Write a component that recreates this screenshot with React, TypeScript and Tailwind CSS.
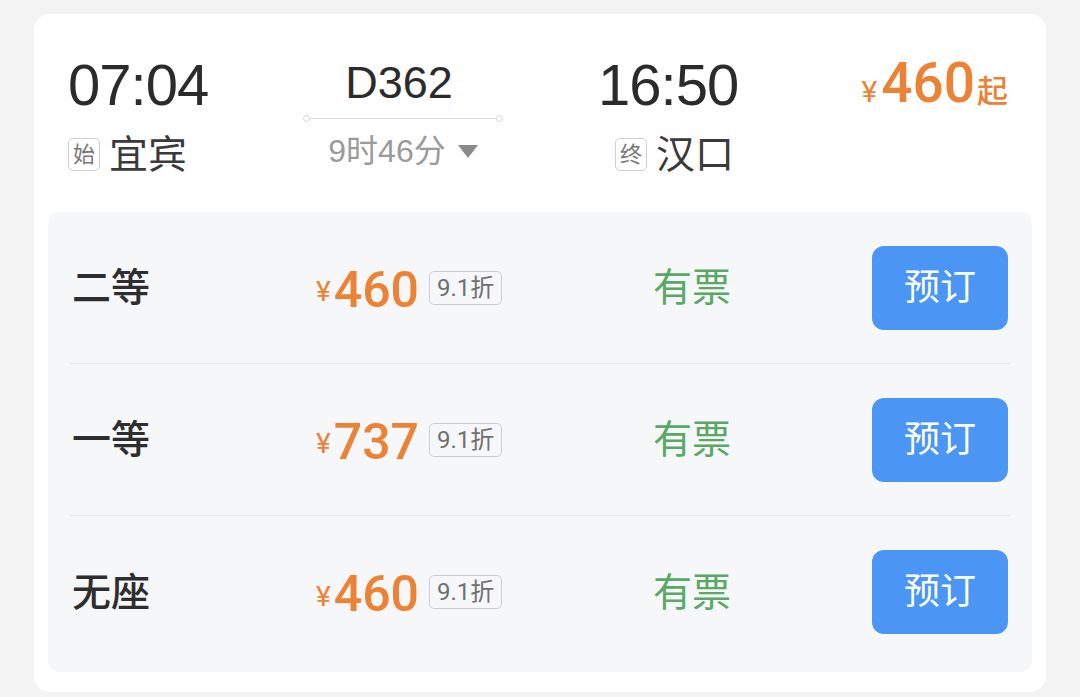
import React from "react";

const font = { fontFamily: '"Liberation Sans", "Noto Sans CJK SC", sans-serif' };
const priceFont = { fontFamily: 'Roboto, "Liberation Sans", "Noto Sans CJK SC", sans-serif' };

const seats = [
  { name: "二等", price: 460, discount: "9.1折" },
  { name: "一等", price: 737, discount: "9.1折" },
  { name: "无座", price: 460, discount: "9.1折" },
];

function StationTag({ label }: { label: string }) {
  return (
    <span className="mr-[9px] inline-flex h-[33px] w-[32px] items-center justify-center rounded-[5px] border border-[#cfcfcf] text-[22px] leading-none text-[#777]">
      {label}
    </span>
  );
}

function SeatRow({ name, price, discount, last }: { name: string; price: number; discount: string; last?: boolean }) {
  return (
    <div className={last ? "mx-[22px] flex h-[152px] items-center" : "mx-[22px] flex h-[152px] items-center border-b border-[#e6e7e9]"}>
      <div className="w-[246px] pl-[2px] text-[39px] font-medium leading-none text-[#2e2e2e]">{name}</div>
      <div className="flex w-[337px] items-center" style={priceFont}>
        <span className="mt-[9px] mr-[3px] text-[28px] leading-none text-[#ec8236]">¥</span>
        <span className="mt-[4px] text-[50px] font-medium leading-none text-[#ec8236]">{price}</span>
        <span className="ml-[10px] inline-flex h-[34px] items-center rounded-[5px] border border-[#cdcdcd] px-[7px] text-[24px] leading-none text-[#6f6f6f]">{discount}</span>
      </div>
      <div className="text-[39px] leading-none text-[#5aa866]">有票</div>
      <button className="ml-auto mr-[2px] flex h-[84px] w-[136px] items-center justify-center rounded-[12px] bg-[#4b95f4] text-[36px] leading-none text-white">
        预订
      </button>
    </div>
  );
}

export default function App() {
  return (
    <main className="h-[697px] w-[1080px] bg-[#f3f3f3] pl-[34px] pt-[14px]" style={font}>
      <div className="h-[678px] w-[1012px] rounded-[16px] bg-white pt-[42px]">
        <div className="flex h-[156px] pl-[34px] pr-[38px]">
          <div className="w-[235px]">
            <div className="text-[58px] leading-none tracking-[-1px] text-[#2b2b2b]">07:04</div>
            <div className="mt-[21px] flex items-center">
              <StationTag label="始" />
              <span className="text-[39px] leading-none text-[#3a3a3a]">宜宾</span>
            </div>
          </div>
          <div className="flex w-[200px] flex-col items-center">
            <div className="mt-[4px] pr-[8px] text-[45px] leading-none text-[#2b2b2b]">D362</div>
            <div className="mt-[10px] flex w-full items-center">
              <span className="h-[7px] w-[7px] rounded-full border border-[#d6d6d6] bg-white" />
              <span className="h-[1.5px] flex-1 bg-[#dedede]" />
              <span className="h-[7px] w-[7px] rounded-full border border-[#d6d6d6] bg-white" />
            </div>
            <div className="mt-[13px] flex items-center text-[32px] leading-none text-[#9a9a9a]">
              9时46分
              <svg className="ml-[12px]" width="20" height="13" viewBox="0 0 20 13">
                <path d="M0 0 H20 L10 13 Z" fill="#8a8a8a" />
              </svg>
            </div>
          </div>
          <div className="ml-[95px] flex flex-col items-start">
            <div className="text-[58px] leading-none tracking-[-1px] text-[#2b2b2b]">16:50</div>
            <div className="ml-[17px] mt-[21px] flex items-center">
              <StationTag label="终" />
              <span className="text-[39px] leading-none text-[#3a3a3a]">汉口</span>
            </div>
          </div>
          <div className="ml-auto flex items-baseline text-[#ec8236]" style={priceFont}>
            <span className="mr-[4px] text-[30px] leading-none">¥</span>
            <span className="text-[55px] font-medium leading-none">460</span>
            <span className="ml-[2px] text-[31px] font-medium leading-none">起</span>
          </div>
        </div>
        <div className="mx-[14px] h-[460px] rounded-[10px] bg-[#f6f7f9]">
          {seats.map((s, i) => (
            <SeatRow key={s.name} name={s.name} price={s.price} discount={s.discount} last={i === seats.length - 1} />
          ))}
        </div>
      </div>
    </main>
  );
}
